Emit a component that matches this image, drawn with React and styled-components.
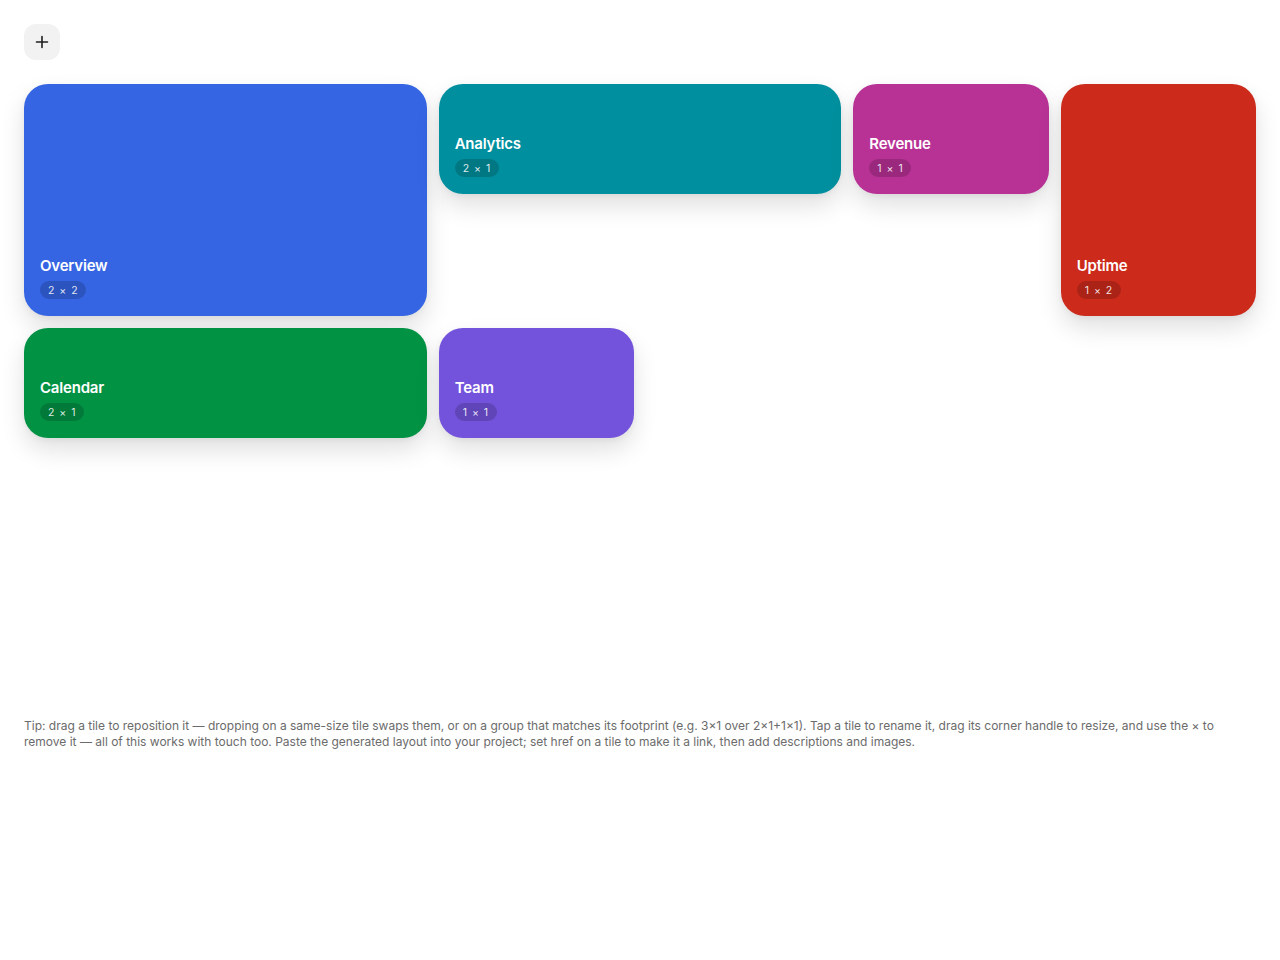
import React from "react";
import styled, { createGlobalStyle } from "styled-components";

const GlobalStyle = createGlobalStyle`
  body {
    margin: 0;
    background: #ffffff;
    font-family: "Inter", "Noto Sans", sans-serif;
    -webkit-font-smoothing: antialiased;
  }
`;

const Page = styled.div`
  padding: 24px;
`;

const AddButton = styled.button`
  width: 36px;
  height: 36px;
  border: none;
  border-radius: 12px;
  background: #f2f2f2;
  color: #222;
  display: flex;
  align-items: center;
  justify-content: center;
  padding: 0;
  cursor: pointer;
`;

const Grid = styled.div`
  margin-top: 24px;
  display: grid;
  grid-template-columns: repeat(6, 1fr);
  grid-auto-rows: 110px;
  gap: 12px;
  min-height: 600px;
  align-content: start;
`;

const Tile = styled.div`
  grid-column: ${(p) => p.$col} / span ${(p) => p.$w};
  grid-row: ${(p) => p.$row} / span ${(p) => p.$h};
  background: ${(p) => p.$bg};
  border-radius: 24px;
  box-shadow: 0 12px 24px rgba(0, 0, 0, 0.12), 0 2px 6px rgba(0, 0, 0, 0.05);
  display: flex;
  flex-direction: column;
  justify-content: flex-end;
  align-items: flex-start;
  padding: 0 16px 17px;
  color: #fff;
`;

const Title = styled.div`
  font-size: 15px;
  font-weight: 600;
  line-height: 20px;
  margin-bottom: 5px;
  letter-spacing: -0.2px;
`;

const Badge = styled.span`
  display: inline-flex;
  align-items: center;
  height: 18px;
  padding: 0 8px;
  border-radius: 9px;
  background: rgba(0, 0, 0, 0.16);
  color: rgba(255, 255, 255, 0.88);
  font-size: 10.5px;
  letter-spacing: 0.5px;
  word-spacing: 1px;
`;

const Tip = styled.p`
  margin: 34px 0 0;
  font-size: 12px;
  line-height: 16px;
  color: #6b6b6b;
`;

const tiles = [
  { name: "Overview", col: 1, row: 1, w: 2, h: 2, bg: "#3565e3" },
  { name: "Analytics", col: 3, row: 1, w: 2, h: 1, bg: "#008f9e" },
  { name: "Revenue", col: 5, row: 1, w: 1, h: 1, bg: "#b83296" },
  { name: "Uptime", col: 6, row: 1, w: 1, h: 2, bg: "#cc2a1b" },
  { name: "Calendar", col: 1, row: 3, w: 2, h: 1, bg: "#029244" },
  { name: "Team", col: 3, row: 3, w: 1, h: 1, bg: "#7353dc" },
];

const App = () => {
  return (
    <Page>
      <GlobalStyle />
      <AddButton aria-label="Add tile">
        <svg width="14" height="14" viewBox="0 0 14 14" fill="none">
          <path d="M7 1.5v11M1.5 7h11" stroke="#1f1f1f" strokeWidth="1.6" strokeLinecap="round" />
        </svg>
      </AddButton>
      <Grid>
        {tiles.map((t) => (
          <Tile key={t.name} $col={t.col} $row={t.row} $w={t.w} $h={t.h} $bg={t.bg}>
            <Title>{t.name}</Title>
            <Badge>
              {t.w} × {t.h}
            </Badge>
          </Tile>
        ))}
      </Grid>
      <Tip>
        Tip: drag a tile to reposition it — dropping on a same-size tile swaps them, or on a group
        that matches its footprint (e.g. 3×1 over 2×1+1×1). Tap a tile to rename it, drag its corner
        handle to resize, and use the × to remove it — all of this works with touch too. Paste the
        generated layout into your project; set href on a tile to make it a link, then add
        descriptions and images.
      </Tip>
    </Page>
  );
};

export default App;
